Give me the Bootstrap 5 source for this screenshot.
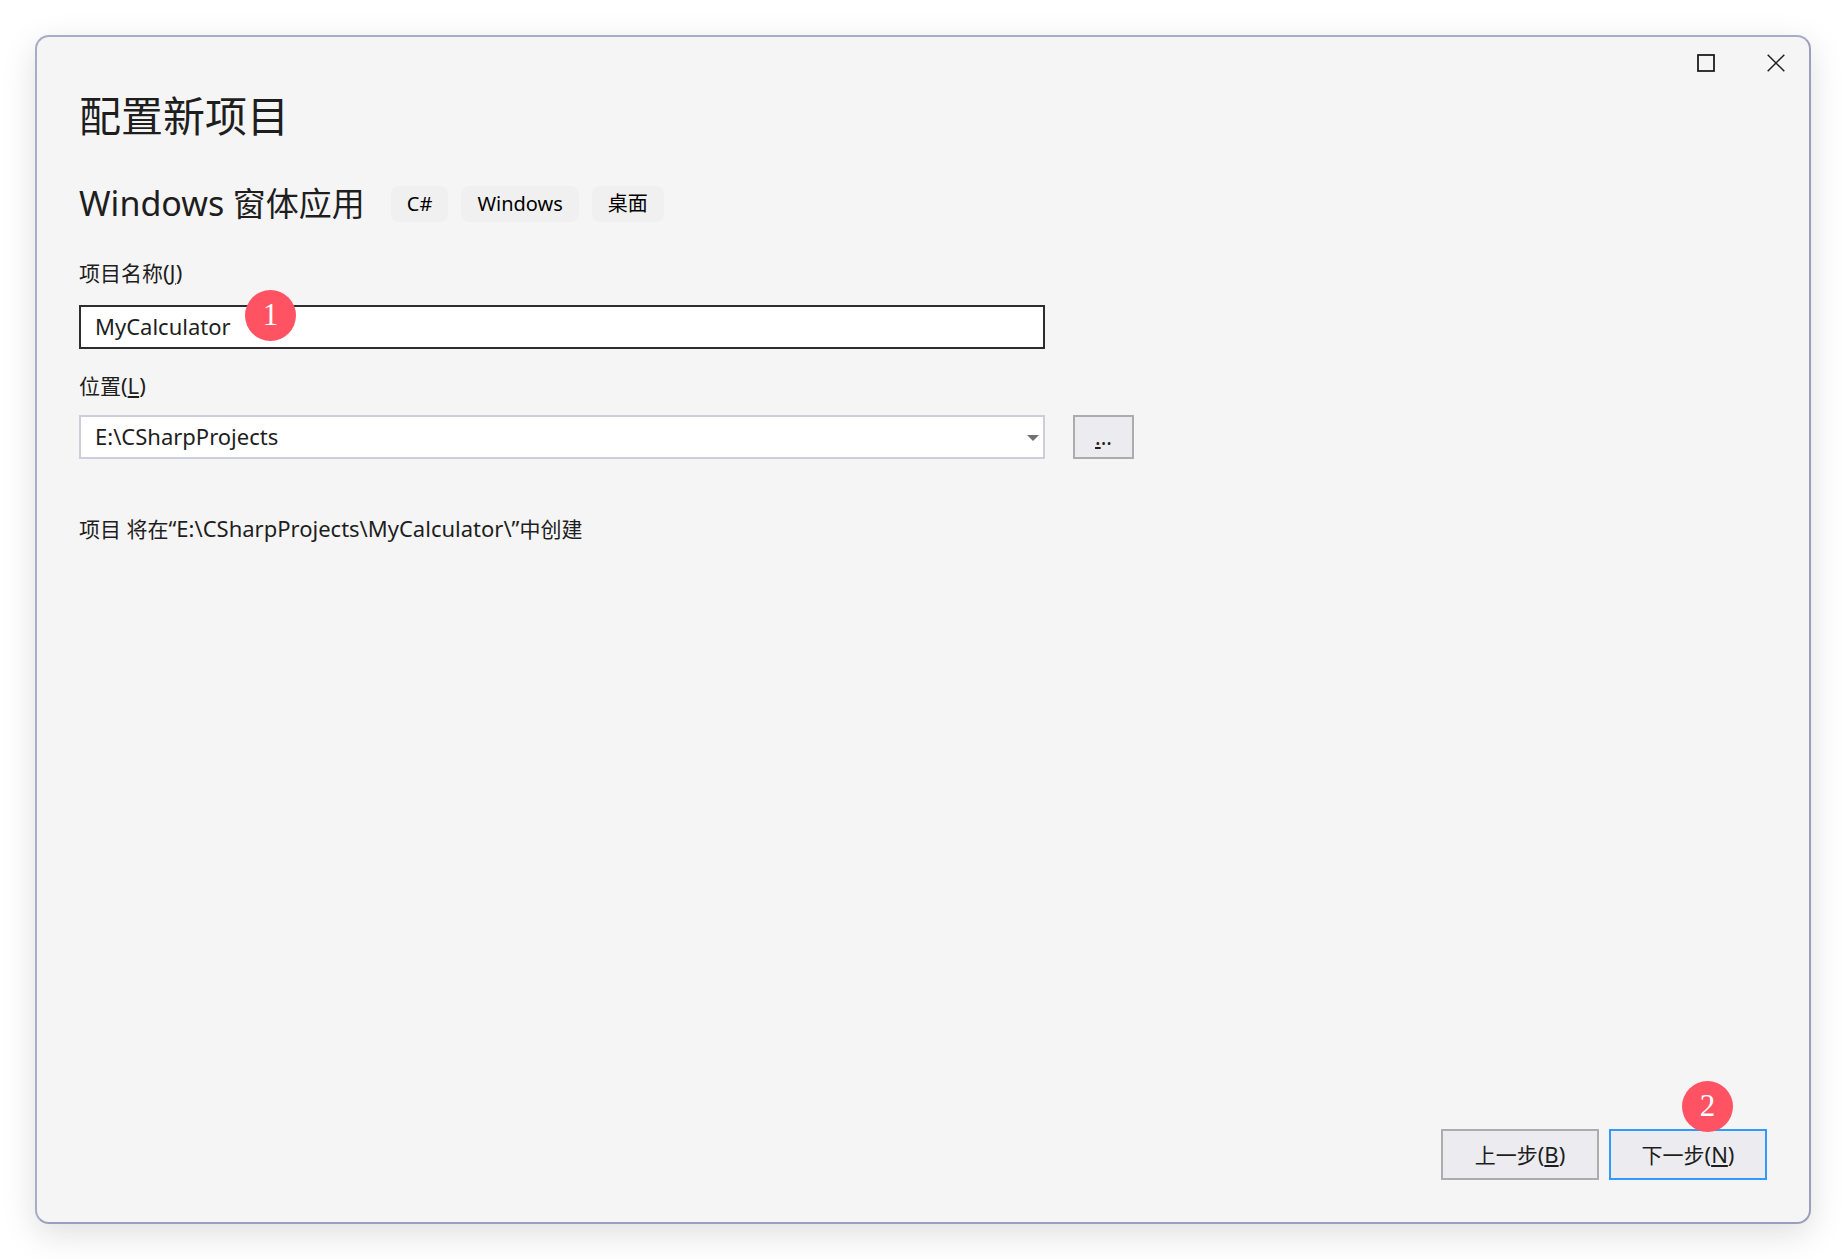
<!DOCTYPE html>
<html lang="zh-CN">
<head>
<meta charset="utf-8">
<meta name="viewport" content="width=device-width, initial-scale=1">
<title>配置新项目</title>
<link href="https://cdn.jsdelivr.net/npm/bootstrap@5.3.0/dist/css/bootstrap.min.css" rel="stylesheet">
<style>
  body { font-family: "Noto Sans", "Noto Sans CJK SC", sans-serif; font-size: 21px; line-height: 28px; color: #1e1e1e; background: #fff; padding: 35px; }
  .dialog-window { background: #f5f5f5; border: 2px solid #9b9fbd; border-top-color: #a9acc7; border-left-color: #a9acc7; border-radius: 14px; box-shadow: 0 10px 34px rgba(0, 0, 0, .13); }
  .window-controls { height: 51px; padding-right: 8px; gap: 20px; }
  .window-controls button { width: 50px; height: 52px; color: #1e1e1e; }
  .dialog-body { padding: 0 42px 42px; }
  .dialog-title { font-size: 42px; line-height: 56px; margin-bottom: 37px; }
  .template-name { font-size: 33px; line-height: 44px; }
  .template-name span { font-size: 34px; }
  .latin-text { font-size: 22px; }
  .tag-list { margin-left: 26px; gap: 13px; }
  .tag-item { background: #f0f0f0; color: #000; border-radius: 8px; font-size: 20px; line-height: 36px; padding: 0 16px; }
  .template-row { margin-bottom: 32px; }
  .field-box { width: 966px; max-width: 100%; }
  .field-box .form-control, .field-box .form-select { height: 44px; padding: 0 14px 2px; border: 2px solid #cccedb; border-radius: 0; background: #fff; color: #1e1e1e; font-size: 22px; line-height: 38px; box-shadow: none; }
  .field-box .form-control { border-color: #2d2d30; }
  .field-label { margin-bottom: 18px; }
  .location-label { margin-bottom: 15px; }
  .name-group { margin-bottom: 22px; }
  .select-arrow { right: 6px; top: 20px; pointer-events: none; }
  .flat-button { height: 51px; min-width: 158px; padding: 0; border: 2px solid #acacac; border-radius: 0; background: #ececf0; color: #1e1e1e; font-size: 21px; line-height: 28px; }
  .flat-button:hover { background: #e2e2ea; }
  .browse-button { height: 44px; min-width: 61px; }
  .primary-button { border-color: #3399ff; }
  .location-row { gap: 28px; margin-bottom: 55px; }
  .action-row { gap: 10px; }
  .step-badge { width: 51px; height: 51px; background: #ff5364; color: #fff; font: 31px/50px "Liberation Serif", serif; text-align: center; pointer-events: none; }
  .step-one { left: 166px; top: -15px; }
  .step-two { left: 73px; top: -48px; }
</style>
<script src="https://cdn.jsdelivr.net/npm/bootstrap@5.3.0/dist/js/bootstrap.bundle.min.js"></script>
</head>
<body class="min-vh-100 d-flex flex-column">
<main class="dialog-window flex-grow-1 d-flex flex-column">
  <div class="window-controls d-flex justify-content-end">
    <button type="button" class="btn p-0 border-0 d-flex align-items-center justify-content-center" aria-label="最大化">
      <svg width="18" height="18" viewBox="0 0 18 18"><rect x="1" y="1" width="16" height="16" fill="none" stroke="currentColor" stroke-width="1.8"/></svg>
    </button>
    <button type="button" class="btn p-0 border-0 d-flex align-items-center justify-content-center" aria-label="关闭">
      <svg width="18" height="18" viewBox="0 0 18 18"><path d="M.7.7l16.6 16.6M17.3.7L.7 17.3" fill="none" stroke="currentColor" stroke-width="1.5"/></svg>
    </button>
  </div>
  <form class="dialog-body flex-grow-1 d-flex flex-column">
    <h1 class="dialog-title fw-normal">配置新项目</h1>
    <div class="template-row d-flex flex-wrap align-items-center">
      <h2 class="template-name fw-normal mb-0"><span>Windows</span> 窗体应用</h2>
      <div class="tag-list d-flex">
        <span class="tag-item">C#</span>
        <span class="tag-item">Windows</span>
        <span class="tag-item">桌面</span>
      </div>
    </div>
    <div class="name-group">
      <label class="field-label d-block" for="projectName">项目名称<span class="latin-text">(<u>J</u>)</span></label>
      <div class="field-box position-relative">
        <input class="form-control" id="projectName" type="text" value="MyCalculator">
        <span class="step-badge step-one position-absolute rounded-circle">1</span>
      </div>
    </div>
    <label class="location-label" for="projectLocation">位置<span class="latin-text">(<u>L</u>)</span></label>
    <div class="location-row d-flex">
      <div class="field-box position-relative">
        <select class="form-select" id="projectLocation"><option>E:\CSharpProjects</option></select>
        <svg class="select-arrow position-absolute" width="12" height="6" viewBox="0 0 12 6"><path d="M0 0h12L6 6z" fill="#717171"/></svg>
      </div>
      <button type="button" class="btn flat-button browse-button" aria-label="浏览"><u>.</u>..</button>
    </div>
    <p class="mb-0">项目 将在<span class="latin-text">“E:\CSharpProjects\MyCalculator\”</span>中创建</p>
    <div class="action-row d-flex justify-content-end mt-auto">
      <button type="button" class="btn flat-button">上一步<span class="latin-text">(<u>B</u>)</span></button>
      <div class="position-relative">
        <button type="submit" class="btn flat-button primary-button">下一步<span class="latin-text">(<u>N</u>)</span></button>
        <span class="step-badge step-two position-absolute rounded-circle">2</span>
      </div>
    </div>
  </form>
</main>
</body>
</html>
